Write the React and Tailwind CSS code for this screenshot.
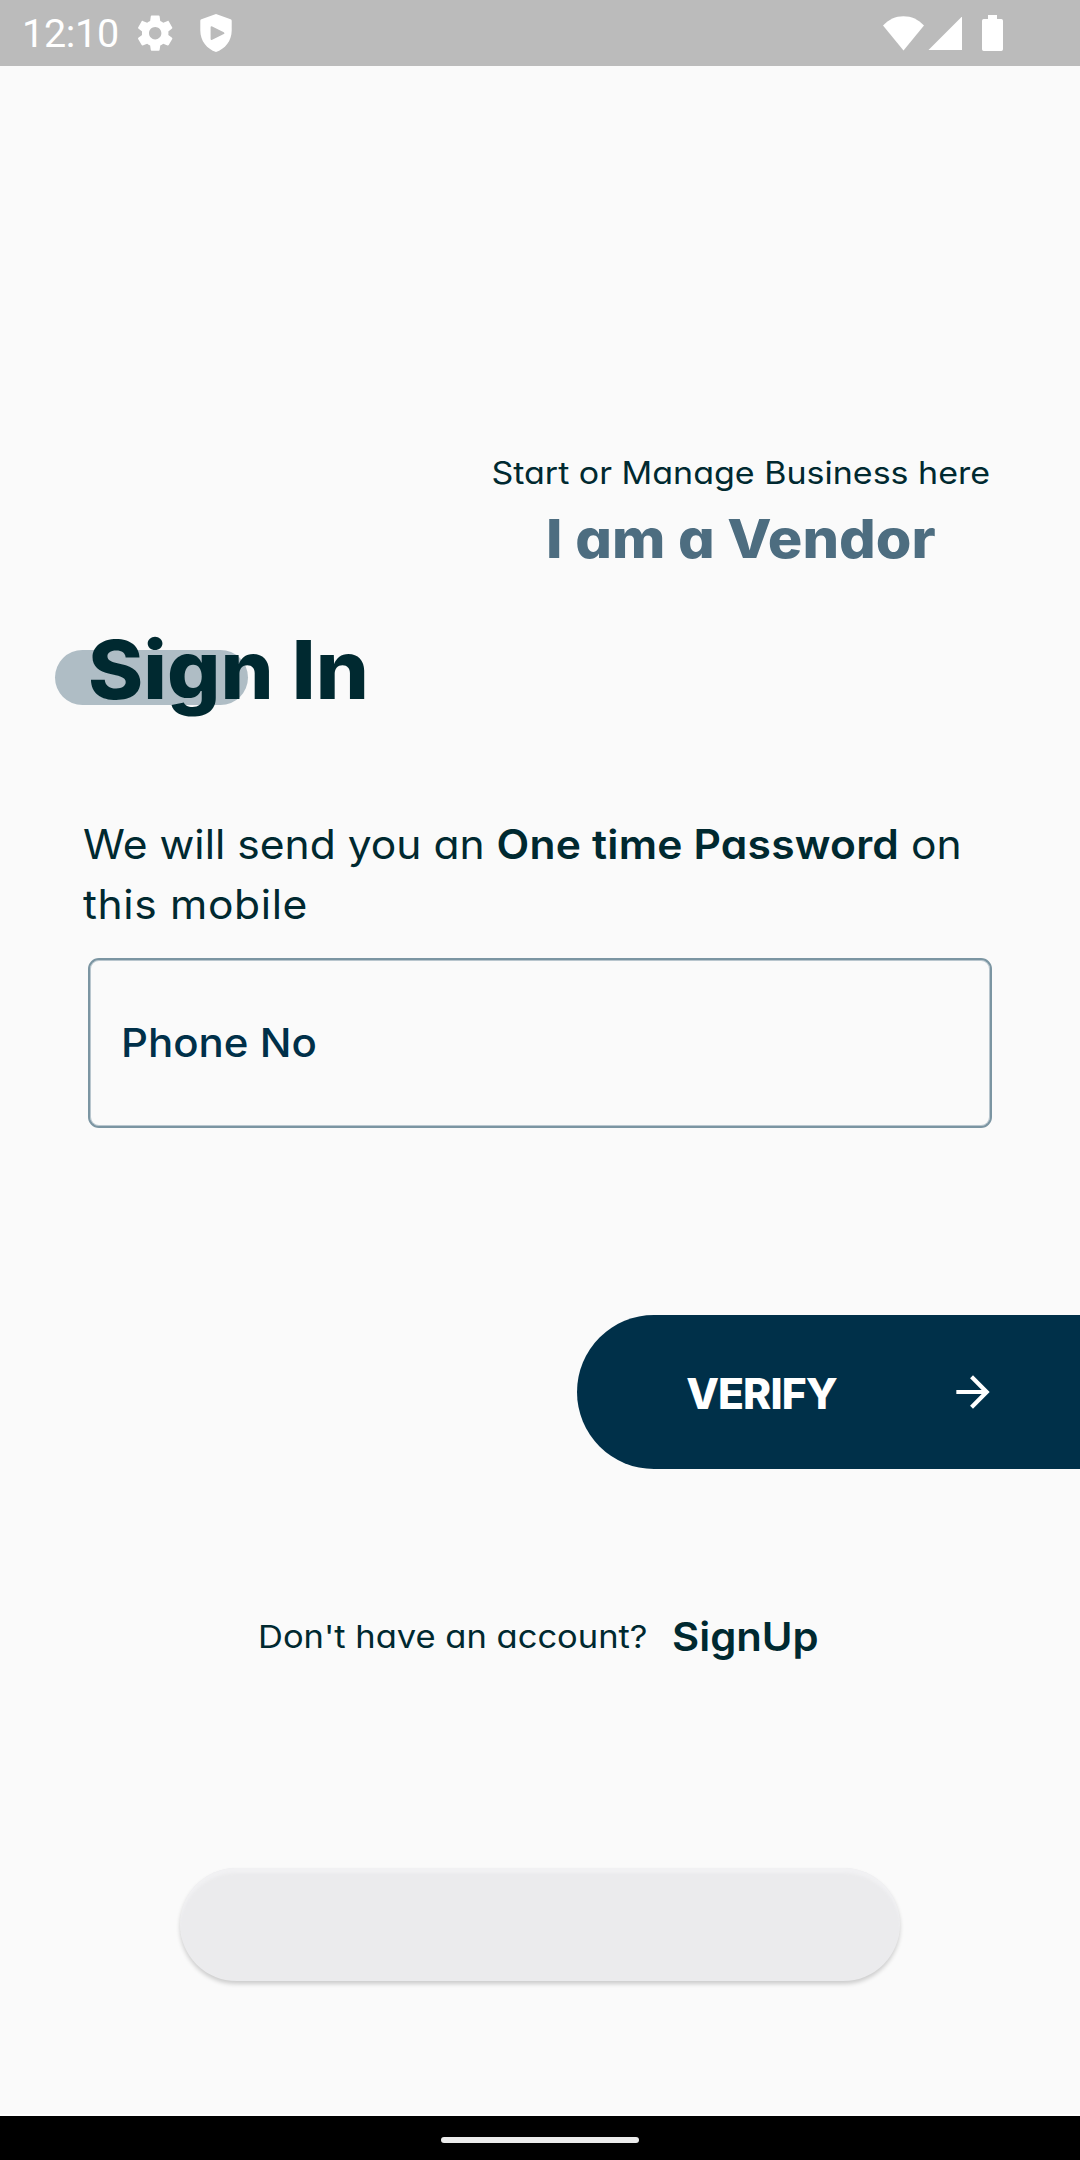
function StatusBar() {
  return (
    <header className="flex h-[66px] shrink-0 items-center bg-[#bbbbbb] text-white">
      <span className="w-[117px] pl-[22px] pt-[2px] font-['Roboto',sans-serif] text-[39.5px] leading-[44px] tracking-[-0.3px] whitespace-nowrap">12:10</span>
      <svg className="ml-[17px] size-[42.4px]" viewBox="0 0 24 24" fill="currentColor">
        <path d="M19.43 12.98c.04-.32.07-.64.07-.98s-.03-.66-.07-.98l2.11-1.65c.19-.15.24-.42.12-.64l-2-3.46c-.12-.22-.39-.3-.61-.22l-2.49 1c-.52-.4-1.08-.73-1.69-.98l-.38-2.65C14.46 2.18 14.25 2 14 2h-4c-.25 0-.46.18-.49.42l-.38 2.65c-.61.25-1.17.59-1.69.98l-2.49-1c-.23-.09-.49 0-.61.22l-2 3.46c-.13.22-.07.49.12.64l2.11 1.65c-.04.32-.07.65-.07.98s.03.66.07.98l-2.11 1.65c-.19.15-.24.42-.12.64l2 3.46c.12.22.39.3.61.22l2.49-1c.52.4 1.08.73 1.69.98l.38 2.65c.03.24.24.42.49.42h4c.25 0 .46-.18.49-.42l.38-2.65c.61-.25 1.17-.59 1.69-.98l2.49 1c.23.09.49 0 .61-.22l2-3.46c.12-.22.07-.49-.12-.64l-2.11-1.65zM12 15.5c-1.93 0-3.5-1.57-3.5-3.5s1.57-3.5 3.5-3.5 3.5 1.57 3.5 3.5-1.57 3.5-3.5 3.5z" />
      </svg>
      <svg className="ml-[24px] h-[38px] w-[32px]" viewBox="0 0 32 38" fill="currentColor" fillRule="evenodd">
        <path d="M16 0 30.6 5.2Q31.7 5.6 31.7 6.8V16.5C31.7 27 25 35 16 38C7 35 .3 27 .3 16.5V6.8Q.3 5.6 1.4 5.2ZM10.6 13.4V24.8Q10.6 26.6 12.2 25.8L23.8 20Q25.4 19.1 23.8 18.2L12.2 12.4Q10.6 11.7 10.6 13.4Z" />
      </svg>
      <svg className="ml-auto h-[35px] w-[41px]" viewBox="0 0 41 35" fill="currentColor">
        <path d="M20.5 34.6 0 9.6C5.6 3.4 12.6.2 20.5.2S35.4 3.4 41 9.6Z" />
      </svg>
      <svg className="ml-[3.5px] h-[34.5px] w-[34.5px]" viewBox="0 0 34.5 34.5" fill="currentColor">
        <path d="M34.5 0V34.5H0Z" />
      </svg>
      <svg className="mr-[77px] ml-[20px] h-[36px] w-[21px]" viewBox="0 0 21 36" fill="currentColor">
        <path d="M6 0H15V4H19.3Q21 4 21 5.7V34.2Q21 36 19.3 36H1.7Q0 36 0 34.2V5.7Q0 4 1.7 4H6Z" />
      </svg>
    </header>
  );
}

export default function App() {
  return (
    <div className="flex h-[2160px] w-[1080px] flex-col overflow-hidden bg-[#fafafa] font-['Inter',sans-serif] text-[#002930] [font-feature-settings:'cv11']">
      <StatusBar />

      <main className="flex flex-1 flex-col border-b-2 border-white">
        <section className="mt-[387px] ml-[491px] flex w-[500px] flex-col items-center whitespace-nowrap">
          <p className="scale-x-[1.09] text-[31.2px] leading-[40px]">Start or Manage Business here</p>
          <a className="mt-[14px] scale-x-[1.077] text-[53.5px] leading-[64px] font-extrabold text-[#4d6d80]">I am a Vendor</a>
        </section>

        <h1 className="relative isolate mt-[51px] ml-[88px] self-start text-[80.7px] leading-[96px] font-extrabold whitespace-nowrap">
          <span className="absolute top-[28px] -left-[33px] -z-10 h-[55px] w-[193px] rounded-full bg-[#afbdc5]" />
          <span className="inline-block origin-left scale-x-[1.037]">Sign In</span>
        </h1>

        <p className="mt-[97px] ml-[83px] origin-left scale-x-[1.056] text-[40.3px] leading-[60px] whitespace-nowrap">
          We will send you an <b className="font-semibold tracking-[0.2px]">One time Password</b> on
          <br />
          <span className="tracking-[0.6px]">this mobile</span>
        </p>

        <div className="mt-[23px] ml-[88px] flex h-[170px] w-[904px] items-center rounded-[11px] border-2 border-[#7b95a2] pl-[31px] text-[40px] font-medium text-[#003049] shadow-[inset_0_0_0_1px_#b9c6ce]">
          <span className="origin-left scale-x-[1.05]">Phone No</span>
        </div>

        <button className="mt-[187px] flex h-[154px] w-[503px] shrink-0 items-center self-end rounded-l-full bg-[#003049] pl-[109px] text-white">
          <span className="w-[151px] pt-[3px] text-[42.6px] leading-[50px] font-extrabold tracking-[-0.9px]">VERIFY</span>
          <svg className="ml-[111px] size-[50px]" viewBox="0 0 24 24" fill="currentColor">
            <path d="M12 4l-1.41 1.41L16.17 11H4v2h12.17l-5.58 5.59L12 20l8-8z" />
          </svg>
        </button>

        <div className="mt-[144px] ml-[258px] flex h-[48px] items-center whitespace-nowrap">
          <span className="w-[414px] origin-left scale-x-[1.092] text-[31.6px]">Don't have an account?</span>
          <a className="origin-left scale-x-[1.045] text-[40px] font-semibold">SignUp</a>
        </div>

        <button className="mt-[207px] h-[113px] w-[720px] shrink-0 self-center rounded-full bg-[#ebebed] shadow-[0_3px_4px_rgba(0,0,0,0.18),inset_0_6px_3px_-1px_#f1f1f3]" />
      </main>

      <footer className="flex h-[44px] shrink-0 justify-center bg-black pt-[21px]">
        <div className="h-[6px] w-[198px] rounded-full bg-[#ececec]" />
      </footer>
    </div>
  );
}
